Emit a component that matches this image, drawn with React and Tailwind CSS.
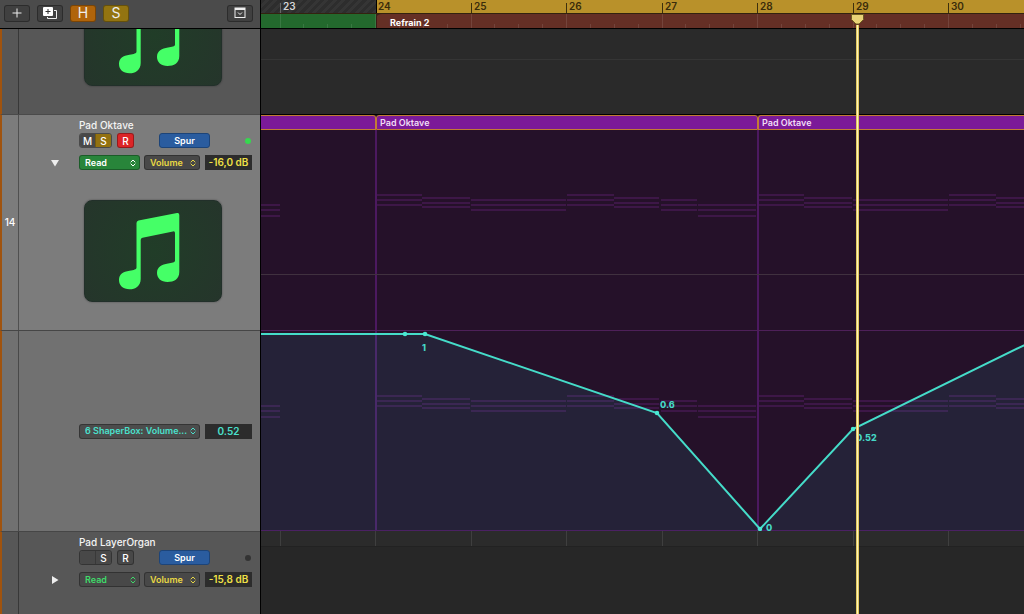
import React, { useState } from "react";
import clsx from "clsx";

const BAR_WIDTH = 95.5;
const FIRST_BAR = 23;
const BARS = Array.from({ length: 8 }, (_, i) => FIRST_BAR + i);

// x of a bar inside the timeline
const barX = (bar) => Math.floor(19 + (bar - FIRST_BAR) * BAR_WIDTH);

// [start, end, y of each note of the chord], relative to the region
const CHORDS = [
  [0, 45, [64, 69, 74]],
  [45, 93, [67, 72, 76]],
  [94, 189, [69, 74, 79]],
  [190, 237, [64, 69, 74]],
  [237, 282, [67, 72, 76]],
  [284, 320, [69, 74, 79]],
  [321, 379, [74, 79, 85]],
];
const TAIL = [[0, 19, [74, 79, 85]]];

const REGIONS = [
  { id: 1, name: "", size: "w-[115px]", chords: TAIL },
  { id: 2, name: "Pad Oktave", size: "w-[382px]", chords: CHORDS },
  { id: 3, name: "Pad Oktave", size: "flex-1", chords: CHORDS },
];

const POINTS = [
  { x: 144, y: 3 },
  { x: 164, y: 3, label: "1", lx: 161, ly: 20 },
  { x: 396, y: 82, label: "0.6", lx: 399, ly: 77 },
  { x: 499, y: 198, label: "0", lx: 505, ly: 200 },
  { x: 592, y: 98, label: "0.52", lx: 595, ly: 110 },
];
const CURVE = "0,3 " + POINTS.map((p) => `${p.x},${p.y}`).join(" ") + " 786,3 4000,3";

function Chevrons({ className }) {
  return (
    <svg viewBox="0 0 6 8" className={clsx("pointer-events-none col-start-1 row-start-1 mr-[3px] h-2 w-1.5 self-center justify-self-end", className)} fill="none" stroke="currentColor" strokeWidth="1">
      <path d="M1 3 3 1l2 2M1 5l2 2 2-2" strokeLinecap="round" strokeLinejoin="round" />
    </svg>
  );
}

function Picker({ label, value, className, color }) {
  return (
    <div className={clsx("grid h-[15px] rounded-[3px] border border-black/30", className, color)}>
      <select
        aria-label={label}
        defaultValue={value}
        className="col-start-1 row-start-1 w-full appearance-none bg-transparent pl-[5px] text-[9px] leading-3 font-semibold outline-none"
      >
        <option>{value}</option>
      </select>
      <Chevrons />
    </div>
  );
}

function ValueField({ label, value, color }) {
  return (
    <input
      aria-label={label}
      defaultValue={value}
      className={clsx("ml-auto h-[15px] w-[47px] bg-[#2c2c2c] text-center text-[10px] font-semibold outline-none", color)}
    />
  );
}

function NoteTile() {
  return (
    <div className="ml-[5px] h-[102px] w-[138px] shrink-0 rounded-lg border border-[#22302a] bg-[radial-gradient(circle,#213d28,#25352b)] shadow-[0_0_2px_#0006]">
      <svg viewBox="1 1 136 100" className="h-full w-full" fill="#45ff67">
        <path d="M52.5 23Q52.5 21 54.5 20.4L93 13Q95.3 12.6 95.3 15V72C95.3 79 90 82 83.5 82C77 82 73 78 73 73C73 66.500 78 64.500 84 63.500C88 62.800 91 62.500 91 60.500V33Q91 31 89 31.400L58.500 37.700Q56.700 38.200 56.700 40V79C56.700 86 51.500 89.300 45.500 89.300C39 89.300 35 85.500 35 80C35 74 39 71.500 45.500 70.700C50 70 52.500 69.500 52.500 67.500Z" />
      </svg>
    </div>
  );
}

function Row({ index, className, children }) {
  return (
    <div className={clsx("flex border-l-2 border-[#a0530e]", className)}>
      <div className="flex w-4 shrink-0 items-center justify-center text-[10px] font-medium text-white">{index}</div>
      <div className="w-px shrink-0 bg-black/35" />
      {children}
    </div>
  );
}

function TrackHeader({ name, volume, active, children }) {
  const [open, setOpen] = useState(active);
  const off = "bg-[#484848]";

  return (
    <div className="flex min-w-0 flex-1 items-start">
      <button
        aria-label="Disclose automation"
        onClick={() => setOpen(!open)}
        className="mt-[42px] mr-4 flex h-3 w-11 items-center justify-end text-[#ededed]"
      >
        <svg viewBox="0 0 8 8" className={clsx("mr-1 h-2 w-2", !open && "-rotate-90")} fill="currentColor">
          <path d="M0 1h8L4 7.500z" />
        </svg>
      </button>
      <div className="flex min-w-0 flex-1 flex-col pt-0.5 pr-2">
        <h2 className="h-4 text-[10px] leading-4 font-medium whitespace-nowrap text-[#f4f4f4]">{name}</h2>
        <div className="flex h-[15px] items-center text-[10px] font-medium text-white">
          <div className="flex h-full w-[33px] overflow-hidden rounded-[3px] border border-black/40">
            <button aria-label="Mute" className={clsx("flex-1", off)}>{active ? "M" : ""}</button>
            <button className={clsx("flex-1 border-l border-black/20", active ? "bg-[#927110]" : off)}>S</button>
          </div>
          <button className={clsx("ml-[5px] h-full w-[17px] rounded-[3px] border border-black/30", active ? "bg-[#dc2527]" : off)}>R</button>
          <button className="ml-[25px] h-full w-[51px] rounded-[3px] border border-[#1d4478] bg-[#2a5c9f] text-[9px] font-semibold">Spur</button>
          <span className={clsx("mr-px ml-auto h-1.5 w-1.5 rounded-full", active ? "bg-[#36d84f]" : "bg-[#333]")} />
        </div>
        <div className="mt-[7px] flex gap-1">
          <Picker
            label="Automation mode"
            value="Read"
            className="w-[61px]"
            color={active ? "bg-[#28853a] text-white" : "bg-[#484848] text-[#3fdc6a]"}
          />
          <Picker label="Parameter" value="Volume" className="w-14" color="bg-[#484848] text-[#e8d844]" />
          <ValueField label="Volume value" value={volume} color="text-[#efe046]" />
        </div>
        {children}
      </div>
    </div>
  );
}

function Toolbar() {
  const btn = "flex h-[17px] w-[26px] items-center justify-center rounded-[3px] border border-black/30 text-[#eee]";
  return (
    <div className="flex h-[29px] items-center gap-[7px] border-b border-black bg-[#4b4b4b] px-1 pb-0.5">
      <button aria-label="Add track" className={clsx(btn, "bg-[#404040]")}>
        <svg viewBox="0 0 10 10" className="h-2.5 w-2.5" stroke="currentColor" strokeWidth="1">
          <path d="M5 .5v9M.5 5h9" />
        </svg>
      </button>
      <button aria-label="Duplicate track" className={clsx(btn, "bg-[#404040]")}>
        <svg viewBox="0 0 14 12" className="h-3 w-3.5" fill="none">
          <path d="M11 3.500h2.500v8h-9V10" stroke="#eee" />
          <rect x="0" y="0" width="10" height="9" rx="1" fill="#fff" />
          <path d="M5 2v5M2.500 4.500h5" stroke="#333" />
        </svg>
      </button>
      <button className={clsx(btn, "bg-[#b0640a] text-[14px] leading-none")}>H</button>
      <button className={clsx(btn, "bg-[#937411] text-[14px] leading-none")}>S</button>
      <button aria-label="Track header options" className={clsx(btn, "mr-[3px] ml-auto bg-[#404040]")}>
        <svg viewBox="0 0 12 12" className="h-3 w-3" fill="none" stroke="currentColor">
          <rect x="1" y="1" width="10" height="9.500" />
          <path d="M1 2h10" strokeWidth="2" />
          <path d="m4 5.500 2 2 2-2" />
        </svg>
      </button>
    </div>
  );
}

function Ruler() {
  return (
    <div className="relative h-[29px] border-b border-black">
      <div className="flex h-3.5 border-b border-[#33220f]">
        <div className="w-[115px] bg-[repeating-linear-gradient(135deg,#2d2d2d_0_3px,#353535_3px_6px)]" />
        <div className="flex-1 border-l border-black bg-[#b9912a]" />
      </div>
      <div className="flex h-3.5">
        <div className="w-[115px] bg-[#23692d]" />
        <div className="flex flex-1 items-center border-l border-[#3a1c14] bg-[#652f25] pt-[3px] pl-[13px] text-[9px] font-bold text-white">
          Refrain 2
        </div>
      </div>
      {BARS.map((bar) => (
        <React.Fragment key={bar}>
          <div
            className={clsx(
              "absolute top-0 h-[13px] pl-[3px] text-[10px] leading-[13px] font-semibold",
              bar === FIRST_BAR ? "text-[#d5d5d5]" : "text-[#3a2c0b]"
            )}
            style={{ left: barX(bar) }}
          >
            {bar}
          </div>
          {bar !== 24 && (
            <div
              className={clsx("absolute top-[3px] h-2.5 w-px", bar === FIRST_BAR ? "bg-[#666]" : "bg-[#3d2f0d]")}
              style={{ left: barX(bar) }}
            />
          )}
          <div className="absolute top-3.5 h-3.5 w-px bg-white/10" style={{ left: barX(bar) }} />
          {[0.25, 0.5, 0.75].map((beat) => (
            <div key={beat} className="absolute top-6 h-1 w-px bg-white/10" style={{ left: barX(bar + beat) }} />
          ))}
        </React.Fragment>
      ))}
      <svg viewBox="0 0 6 4" className="absolute top-3.5 left-[115px] h-1 w-1.5" fill="#3a2019">
        <path d="M0 0h6Q1 0 0 4z" />
      </svg>
    </div>
  );
}

function Notes({ chords }) {
  return (
    <svg className="h-full w-full" fill="#8a2fa8" fillOpacity="0.24">
      {chords.map(([start, end, rows]) =>
        rows.map((y) => <rect key={`${start}-${y}`} x={start} y={y} width={end - start} height="2" />)
      )}
    </svg>
  );
}

function RegionLane() {
  return (
    <div className="relative flex h-[216px] border-b border-[#4e2059] bg-[#251129]">
      {REGIONS.map((region) => (
        <section key={region.id} className={clsx("flex shrink-0 flex-col overflow-hidden", region.size)}>
          <h3
            className={clsx(
              "h-[15px] shrink-0 border-y border-[#c27b35] bg-[#7b1a98] pl-[3px] text-[9px] leading-[13px] font-semibold text-[#f0dcf6]",
              region.id !== 1 && "rounded-tl-[3px] border-l",
              region.id !== 3 && "rounded-tr-[3px] border-r"
            )}
          >
            {region.name}
          </h3>
          <div className={clsx("flex-1 border-[#4c1960]", region.id !== 1 && "border-l", region.id !== 3 && "border-r")}>
            <Notes chords={region.chords} />
          </div>
        </section>
      ))}
      <div className="absolute inset-x-0 top-[159px] h-px bg-[#40313f]" />
    </div>
  );
}

function AutomationLane() {
  return (
    <div className="relative flex h-[200px] border-b border-[#4b2163] bg-[#251129]">
      {REGIONS.map((region) => (
        <div
          key={region.id}
          className={clsx("shrink-0 border-[#4c1960]", region.size, region.id !== 1 && "border-l", region.id !== 3 && "border-r")}
        >
          <Notes chords={region.chords} />
        </div>
      ))}
      <svg className="absolute inset-0 h-full w-full overflow-visible">
        <polygon points={`${CURVE} 4000,199 0,199`} fill="#2fd8d0" fillOpacity="0.09" />
        <polyline points={CURVE} fill="none" stroke="#45dcc9" strokeWidth="2" />
        {POINTS.map((p) => (
          <g key={p.x} fill="#4ae8d3">
            <circle cx={p.x} cy={p.y} r="2.250" />
            {p.label && (
              <text x={p.lx} y={p.ly} className="text-[9px] font-extrabold" fill="#45d8c6">
                {p.label}
              </text>
            )}
          </g>
        ))}
      </svg>
    </div>
  );
}

export default function App() {
  return (
    <div className="flex min-h-screen bg-[#2a2a2a] font-['Inter','Liberation_Sans',sans-serif] select-none">
      {/* Track headers */}
      <aside className="flex w-[261px] shrink-0 flex-col border-r border-black">
        <Toolbar />
        <Row className="h-[86px] overflow-hidden border-b border-b-[#4a4a4a] bg-[#575757]">
          <div className="flex flex-1 flex-col justify-end pb-7 pl-[60px]">
            <NoteTile />
          </div>
        </Row>
        <Row index={14} className="h-[216px] border-b border-b-[#464646] bg-[#7c7c7c]">
          <TrackHeader name="Pad Oktave" volume="-16,0 dB" active>
            <div className="h-[30px]" />
            <NoteTile />
          </TrackHeader>
        </Row>
        <Row className="h-[201px] border-b border-b-[#464646] bg-[#717171]">
          <div className="flex flex-1 items-center pr-2 pl-[60px]">
            <Picker label="Parameter" value="6 ShaperBox: Volume..." className="w-[121px]" color="bg-[#4c4c4c] text-[#4ae0cc]" />
            <ValueField label="ShaperBox value" value="0.52" color="text-[#4ae0cc]" />
          </div>
        </Row>
        <Row className="flex-1 bg-[#575757]">
          <TrackHeader name="Pad LayerOrgan" volume="-15,8 dB" active={false} />
        </Row>
      </aside>

      {/* Timeline */}
      <main className="relative flex min-w-0 flex-1 flex-col overflow-hidden">
        <Ruler />
        <div className="flex h-[86px] flex-col border-b border-black">
          <div className="h-[31px] border-b border-[#353535]" />
        </div>
        <RegionLane />
        <AutomationLane />
        <div className="flex-1 bg-[#272727]">
          <div className="relative h-4 border-b border-[#222] bg-[#2b2b2b]">
            {BARS.map((bar) => (
              <div key={bar} className="absolute top-0 h-[15px] w-px bg-[#3f3f3f]" style={{ left: barX(bar) }} />
            ))}
          </div>
        </div>

        {/* Playhead */}
        <div className="absolute top-3.5 bottom-0 flex w-[13px] flex-col items-center" style={{ left: barX(29) - 2 }}>
          <svg viewBox="0 0 13 11" className="h-[11px] w-[13px] shrink-0" fill="#e9d277" stroke="#6b5a20">
            <path d="M.5.5h12v5L8 10H5L.5 5.500z" />
          </svg>
          <div className="w-[3px] flex-1 border-x border-[#dfc75f] bg-[#fff3b8]" />
        </div>
      </main>
    </div>
  );
}
